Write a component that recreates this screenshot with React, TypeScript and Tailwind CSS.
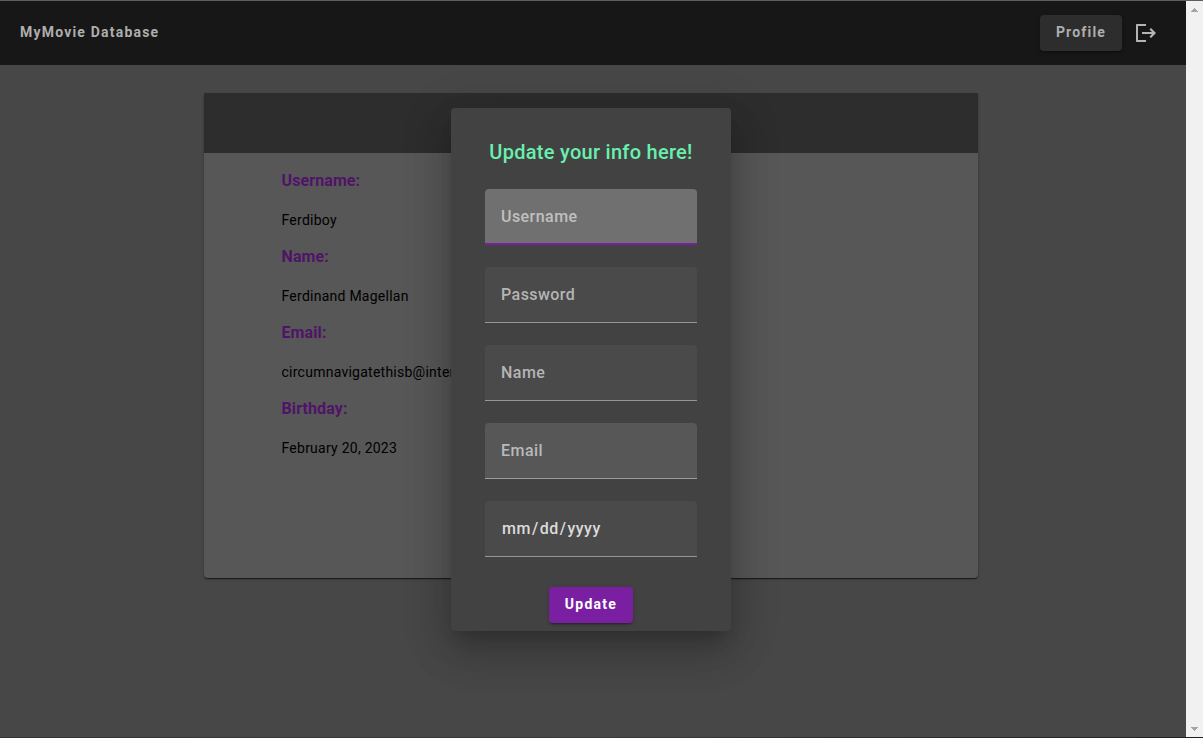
const details = [
  { label: "Username:", value: "Ferdiboy" },
  { label: "Name:", value: "Ferdinand Magellan" },
  { label: "Email:", value: "circumnavigatethisb@inter" },
  { label: "Birthday:", value: "February 20, 2023" },
];

const fields = [
  { label: "Username", look: "bg-[#707070] pt-0.5 border-b-2 border-[#7b1fa2] text-[#c0c0c0]" },
  { label: "Password", look: "bg-[#4a4a4a] border-b border-[#969696] text-[#b5b5b5]" },
  { label: "Name", look: "bg-[#4a4a4a] border-b border-[#969696] text-[#b5b5b5]" },
  { label: "Email", look: "bg-[#575757] border-b border-[#9c9c9c] text-[#b9b9b9]" },
];

function Header() {
  return (
    <header className="flex h-16 shrink-0 items-center justify-between bg-[#171717] pl-5 pr-7">
      <span className="pb-0.5 text-sm font-bold tracking-[1.2px] text-[#aeaeae]">MyMovie Database</span>
      <div className="flex items-center gap-3">
        <button className="flex h-9 w-[82px] items-center justify-center rounded bg-[#2d2d2d] pb-0.5 text-sm font-bold tracking-[1.2px] text-[#aeaeae] shadow-[0_3px_1px_-2px_rgba(0,0,0,0.2),0_2px_2px_0_rgba(0,0,0,0.14),0_1px_5px_0_rgba(0,0,0,0.12)]">
          Profile
        </button>
        <svg viewBox="0 0 24 24" className="size-6 fill-[#b4b4b4]" aria-hidden="true">
          <path d="M17 7l-1.5 1.5L18 11H8v2h10l-2.5 2.5L17 17l5-5zM4 5h8V3H3c-.6 0-1 .4-1 1v16c0 .6.4 1 1 1h9v-2H4V5z" />
        </svg>
      </div>
    </header>
  );
}

function ProfileCard() {
  return (
    <section className="ml-[204px] mt-7 h-[485px] w-[774px] rounded bg-[#575757] shadow-[0_2px_1px_-1px_rgba(0,0,0,0.4),0_1px_1px_0_rgba(0,0,0,0.28),0_1px_3px_0_rgba(0,0,0,0.24)]">
      <div className="h-[60px] bg-[#2d2d2d]" />
      <dl className="pl-[77.5px] pt-[17px]">
        {details.map((d) => (
          <div key={d.label} className="h-[76px]">
            <dt className="text-base leading-[22px] font-bold tracking-[0.1px] text-[#4f1468]">{d.label}</dt>
            <dd className="pt-[18px] text-sm leading-5 tracking-[0.25px] text-black">{d.value}</dd>
          </div>
        ))}
      </dl>
    </section>
  );
}

function UpdateDialog() {
  return (
    <div className="absolute left-[451px] top-[107px] flex h-[523px] w-[280px] flex-col items-center rounded bg-[#424242] shadow-[0_11px_15px_-7px_rgba(0,0,0,0.2),0_24px_38px_3px_rgba(0,0,0,0.14),0_9px_46px_8px_rgba(0,0,0,0.12)]">
      <h1 className="mt-7 text-xl leading-8 font-medium tracking-[0.28px] text-[#69f0ae]">Update your info here!</h1>
      <div className="mt-[21px] flex w-[212px] flex-col gap-[22px]">
        {fields.map((f) => (
          <div
            key={f.label}
            className={`flex h-14 items-center rounded-t px-4 text-base font-medium tracking-[0.45px] ${f.look}`}
          >
            {f.label}
          </div>
        ))}
        <div className="flex h-14 items-center rounded-t border-b border-[#969696] bg-[#4a4a4a] px-[17px] text-base font-medium tracking-[0.5px] text-[#dbdbdb]">
          <span>mm</span>
          <span className="px-px">/</span>
          <span>dd</span>
          <span className="px-px">/</span>
          <span>yyyy</span>
        </div>
      </div>
      <button className="mt-[30px] flex h-9 w-[84px] items-center justify-center rounded bg-[#7b1fa2] pb-0.5 text-sm font-bold tracking-[1.25px] text-white shadow-[0_3px_1px_-2px_rgba(0,0,0,0.2),0_2px_2px_0_rgba(0,0,0,0.14),0_1px_5px_0_rgba(0,0,0,0.12)]">
        Update
      </button>
    </div>
  );
}

function Scrollbar() {
  return (
    <div className="flex w-[17px] flex-col items-center justify-between bg-[#f1f1f1] pt-[7px] pb-1.5">
      <svg viewBox="0 0 7 4" className="h-1 w-[7px] fill-[#a3a3a3]">
        <path d="M3 0h1v1h1v1h1v1h1v1H0V3h1V2h1V1h1z" />
      </svg>
      <svg viewBox="0 0 7 4" className="h-1 w-[7px] fill-[#a3a3a3]">
        <path d="M0 0h7v1H6v1H5v1H4v1H3V3H2V2H1V1H0z" />
      </svg>
    </div>
  );
}

export default function App() {
  return (
    <div className="relative flex h-[738px] w-[1203px] flex-col overflow-hidden border-t border-t-[#5d5d62] font-['Roboto',sans-serif]">
      <div className="flex grow">
        <main className="flex w-[1186px] flex-col bg-[#474747]">
          <Header />
          <ProfileCard />
        </main>
        <Scrollbar />
      </div>
      <div className="h-px shrink-0 bg-linear-to-r from-[#33332b] via-[#3b3936] to-[#231f23]" />
      <UpdateDialog />
    </div>
  );
}
